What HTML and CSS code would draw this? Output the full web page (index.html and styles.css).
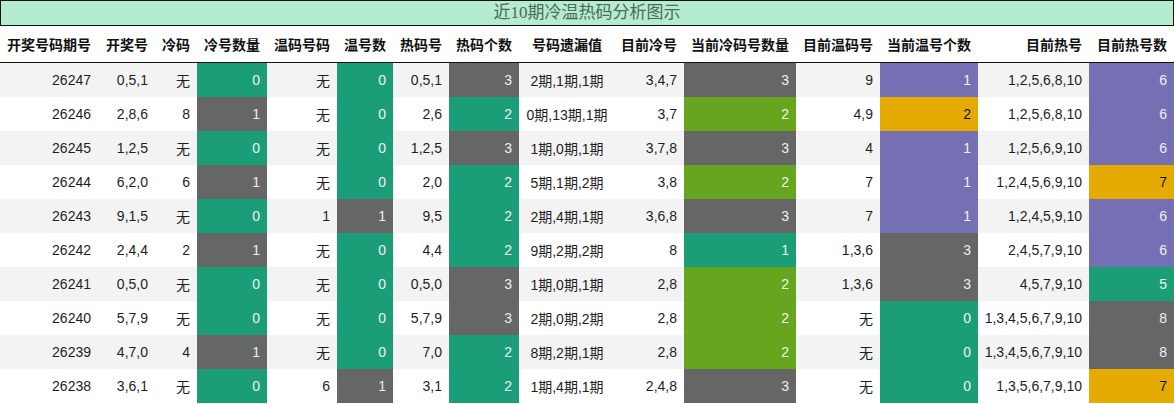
FILE: index.html
```html
<!DOCTYPE html>
<html lang="zh">
<head>
<meta charset="utf-8">
<title>近10期冷温热码分析图示</title>
<link rel="stylesheet" href="styles.css">
</head>
<body>
<div class="title">近10期冷温热码分析图示</div>
<table class="grid">
<colgroup>
<col class="w98"><col class="w57"><col class="w42"><col class="w70"><col class="w70"><col class="w56"><col class="w56"><col class="w70"><col class="w96"><col class="w69"><col class="w112"><col class="w84"><col class="w98"><col class="w111"><col class="w85">
</colgroup>
<thead>
<tr><th>开奖号码期号</th><th>开奖号</th><th>冷码</th><th>冷号数量</th><th>温码号码</th><th>温号数</th><th>热码号</th><th>热码个数</th><th class="c">号码遗漏值</th><th>目前冷号</th><th>当前冷码号数量</th><th>目前温码号</th><th>当前温号个数</th><th>目前热号</th><th>目前热号数</th></tr>
</thead>
<tbody>
<tr><td>26247</td><td>0,5,1</td><td>无</td><td class="g">0</td><td>无</td><td class="g">0</td><td>0,5,1</td><td class="k">3</td><td class="c">2期,1期,1期</td><td>3,4,7</td><td class="k">3</td><td>9</td><td class="p">1</td><td>1,2,5,6,8,10</td><td class="p">6</td></tr>
<tr><td>26246</td><td>2,8,6</td><td>8</td><td class="k">1</td><td>无</td><td class="g">0</td><td>2,6</td><td class="g">2</td><td class="c">0期,13期,1期</td><td>3,7</td><td class="l">2</td><td>4,9</td><td class="y">2</td><td>1,2,5,6,8,10</td><td class="p">6</td></tr>
<tr><td>26245</td><td>1,2,5</td><td>无</td><td class="g">0</td><td>无</td><td class="g">0</td><td>1,2,5</td><td class="k">3</td><td class="c">1期,0期,1期</td><td>3,7,8</td><td class="k">3</td><td>4</td><td class="p">1</td><td>1,2,5,6,9,10</td><td class="p">6</td></tr>
<tr><td>26244</td><td>6,2,0</td><td>6</td><td class="k">1</td><td>无</td><td class="g">0</td><td>2,0</td><td class="g">2</td><td class="c">5期,1期,2期</td><td>3,8</td><td class="l">2</td><td>7</td><td class="p">1</td><td>1,2,4,5,6,9,10</td><td class="y">7</td></tr>
<tr><td>26243</td><td>9,1,5</td><td>无</td><td class="g">0</td><td>1</td><td class="k">1</td><td>9,5</td><td class="g">2</td><td class="c">2期,4期,1期</td><td>3,6,8</td><td class="k">3</td><td>7</td><td class="p">1</td><td>1,2,4,5,9,10</td><td class="p">6</td></tr>
<tr><td>26242</td><td>2,4,4</td><td>2</td><td class="k">1</td><td>无</td><td class="g">0</td><td>4,4</td><td class="g">2</td><td class="c">9期,2期,2期</td><td>8</td><td class="g">1</td><td>1,3,6</td><td class="k">3</td><td>2,4,5,7,9,10</td><td class="p">6</td></tr>
<tr><td>26241</td><td>0,5,0</td><td>无</td><td class="g">0</td><td>无</td><td class="g">0</td><td>0,5,0</td><td class="k">3</td><td class="c">1期,0期,1期</td><td>2,8</td><td class="l">2</td><td>1,3,6</td><td class="k">3</td><td>4,5,7,9,10</td><td class="g">5</td></tr>
<tr><td>26240</td><td>5,7,9</td><td>无</td><td class="g">0</td><td>无</td><td class="g">0</td><td>5,7,9</td><td class="k">3</td><td class="c">2期,0期,2期</td><td>2,8</td><td class="l">2</td><td>无</td><td class="g">0</td><td>1,3,4,5,6,7,9,10</td><td class="k">8</td></tr>
<tr><td>26239</td><td>4,7,0</td><td>4</td><td class="k">1</td><td>无</td><td class="g">0</td><td>7,0</td><td class="g">2</td><td class="c">8期,2期,1期</td><td>2,8</td><td class="l">2</td><td>无</td><td class="g">0</td><td>1,3,4,5,6,7,9,10</td><td class="k">8</td></tr>
<tr><td>26238</td><td>3,6,1</td><td>无</td><td class="g">0</td><td>6</td><td class="k">1</td><td>3,1</td><td class="g">2</td><td class="c">1期,4期,1期</td><td>2,4,8</td><td class="k">3</td><td>无</td><td class="g">0</td><td>1,3,5,6,7,9,10</td><td class="y">7</td></tr>
</tbody>
</table>
</body>
</html>
```
FILE: styles.css
```css
html, body {
  margin: 0;
  padding: 0;
  background: #ffffff;
}
body {
  width: 1174px;
  font-family: "Liberation Sans", "Noto Sans CJK SC", sans-serif;
  color: #1e1e1e;
}
.title {
  box-sizing: border-box;
  height: 26px;
  border: 1px solid #111;
  background: #b4eccf;
  color: #4b6b59;
  font-family: "Liberation Serif", "Noto Sans CJK SC", serif;
  font-size: 17px;
  line-height: 23px;
  text-align: center;
}
.grid {
  width: 1174px;
  table-layout: fixed;
  border-collapse: separate;
  border-spacing: 0;
  font-size: 14px;
}
.w98 { width: 98px; }
.w57 { width: 57px; }
.w42 { width: 42px; }
.w70 { width: 70px; }
.w56 { width: 56px; }
.w96 { width: 96px; }
.w69 { width: 69px; }
.w112 { width: 112px; }
.w84 { width: 84px; }
.w111 { width: 111px; }
.w85 { width: 85px; }
.grid th {
  height: 36px;
  padding: 0 7px 0 0;
  text-align: right;
  font-family: "Noto Sans CJK SC", sans-serif;
  font-weight: 700;
  font-size: 14px;
  color: #111;
  border-bottom: 1px solid #111;
  white-space: nowrap;
  vertical-align: middle;
}
.grid td {
  height: 34px;
  padding: 0 7px 0 0;
  text-align: right;
  white-space: nowrap;
  vertical-align: middle;
}
.grid .c {
  text-align: center;
  padding: 0;
}
.grid tbody tr:nth-child(odd) td {
  background: #f3f3f3;
}
.grid tbody tr td.g { background: #1b9e77; color: #eef4f1; }
.grid tbody tr td.k { background: #666666; color: #eeeeee; }
.grid tbody tr td.p { background: #7570b3; color: #f0f0f6; }
.grid tbody tr td.l { background: #66a61e; color: #f0f4ea; }
.grid tbody tr td.y { background: #e6ab02; color: #111; }
```
